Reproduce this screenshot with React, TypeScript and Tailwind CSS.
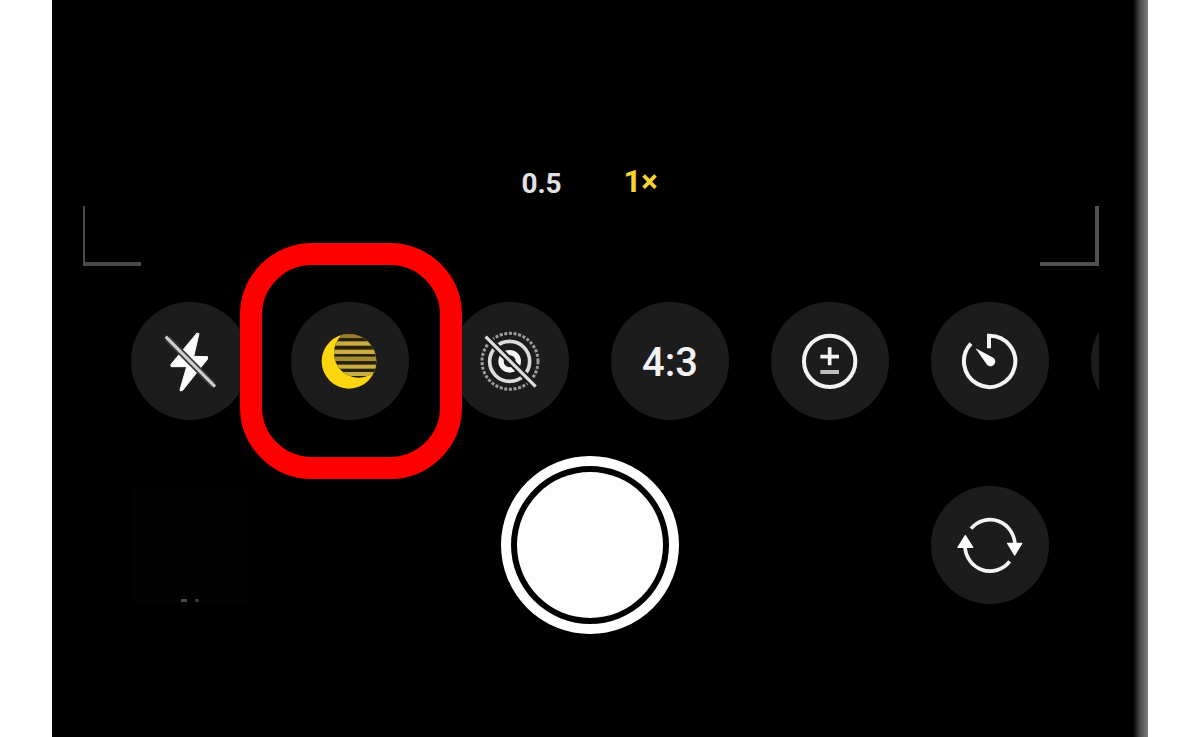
import React, { useState } from 'react';

const iconProps = {
  viewBox: '0 0 180 180',
  fill: 'none',
  'aria-hidden': true,
  className: 'w-[60px] h-[60px] overflow-visible',
};

const FlashOffIcon = () => (
  <svg {...iconProps}>
    <path d="M111 6 L117 8 L101 76 L143 77 L142 85 L68 178 L61 180 L60 176 L80 107 L33 107 L33 100 Z" fill="#fff" stroke="#fff" strokeWidth="3" strokeLinejoin="round" />
    <path d="M22 22 L160 162" stroke="#3a3a3a" strokeWidth="20" />
    <path d="M17 17 L165 167" stroke="#cfcfcf" strokeWidth="9" />
  </svg>
);

const NightModeIcon = () => (
  <svg {...iconProps}>
    <defs>
      <clipPath id="moon-disc"><circle cx="87" cy="91" r="82" /></clipPath>
      <clipPath id="moon-shade"><circle cx="116" cy="66" r="74" /></clipPath>
    </defs>
    <circle cx="87" cy="91" r="82" fill="#fcd60e" />
    <g clipPath="url(#moon-disc)">
      <g clipPath="url(#moon-shade)">
        <rect width="180" height="180" fill="#2a220c" />
        <g fill="#c9ae42">
          <rect y="6" width="180" height="15" fill="#97802c" />
          <rect y="31" width="180" height="13" />
          <rect y="56" width="180" height="13" />
          <rect y="77" width="180" height="13" fill="#a88f34" />
          <rect y="101" width="180" height="12" />
          <rect y="123" width="180" height="12" />
        </g>
      </g>
    </g>
  </svg>
);

const LiveOffIcon = () => (
  <svg {...iconProps}>
    <circle cx="90" cy="91" r="84" stroke="#9c9c9c" strokeWidth="9" strokeDasharray="9 5" />
    <circle cx="89" cy="91" r="60" stroke="#dcdcdc" strokeWidth="11" />
    <circle cx="89" cy="91" r="26" stroke="#f4f4f4" strokeWidth="16" />
    <path d="M8 7 L163 163" stroke="#1c1c1c" strokeWidth="22" />
    <path d="M17 17 L167 167" stroke="#dedede" strokeWidth="10" />
  </svg>
);

const ExposureIcon = () => (
  <svg {...iconProps} stroke="#f4f4f4">
    <circle cx="89" cy="91" r="77" strokeWidth="12" />
    <path d="M89 49 V103 M61 77 H117" strokeWidth="11" />
    <path d="M61 123 H117" stroke="#bdbdbd" strokeWidth="12" />
  </svg>
);

const TimerIcon = () => (
  <svg {...iconProps}>
    <path d="M87 52 V14 A77 77 0 1 1 33 38" stroke="#f4f4f4" strokeWidth="12" />
    <path d="M49 54 L101 82 A12 12 0 1 1 82 101 Z" fill="#fff" stroke="#fff" strokeWidth="2" strokeLinejoin="round" />
  </svg>
);

const FlipIcon = () => (
  <svg {...iconProps}>
    <path d="M33 41 A75 77 0 0 1 165 91 M149 139 A75 77 0 0 1 15 91" stroke="#f4f4f4" strokeWidth="11" />
    <path d="M143 85 H185 L164 120 Z M-6 97 H38 L16 62 Z" fill="#fff" stroke="#fff" strokeWidth="4" strokeLinejoin="round" />
  </svg>
);

interface RoundButtonProps {
  label: string;
  children?: React.ReactNode;
}

const RoundButton: React.FC<RoundButtonProps> = ({ label, children }) => (
  <button
    type="button"
    aria-label={label}
    className="relative flex h-[118px] w-[118px] shrink-0 items-center justify-center rounded-full bg-[#1c1c1c]"
  >
    {children}
  </button>
);

const App: React.FC = () => {
  const [zoom, setZoom] = useState<'0.5' | '1'>('1');

  return (
    <div className="min-h-screen bg-white px-[52px] font-['Roboto',sans-serif]">
      <div className="flex min-h-screen bg-black">
        <main className="min-w-0 flex-1 pr-8 pl-[31px]">
          {/* Viewfinder */}
          <div className="flex items-start justify-center pt-[163px]">
            <button
              type="button"
              onClick={() => setZoom('0.5')}
              className={`h-[41px] w-[99px] text-[28px] leading-10 font-bold ${zoom === '0.5' ? 'text-[#fbd52f]' : 'text-[#e2e2e2]'}`}
            >
              0.5
            </button>
            <button
              type="button"
              onClick={() => setZoom('1')}
              className={`h-[41px] w-[99px] pb-1 text-[31px] leading-9 font-bold ${zoom === '1' ? 'text-[#fbd52f]' : 'text-[#e2e2e2]'}`}
            >
              1×
            </button>
          </div>
          <div className="mt-0.5 flex h-[60px] justify-between">
            <div className="w-[58px] border-b-4 border-l-2 border-[#4a4a4a]" />
            <div className="w-[59px] border-r-4 border-b-4 border-[#505050]" />
          </div>

          {/* Camera tools, the last one runs off the edge */}
          <div className="mt-9 flex gap-[42px] overflow-x-clip pl-12">
            <RoundButton label="Flash off"><FlashOffIcon /></RoundButton>
            <RoundButton label="Night mode">
              <NightModeIcon />
              <span className="pointer-events-none absolute -top-[59px] -right-[53px] -bottom-[59px] -left-[51px] z-10 rounded-[72px] border-[22px] border-[#ff0000]" />
            </RoundButton>
            <RoundButton label="Live photo off"><LiveOffIcon /></RoundButton>
            <RoundButton label="Aspect ratio 4:3">
              <span className="pt-1 text-[40px] font-medium text-[#f2f2f2]">4:3</span>
            </RoundButton>
            <RoundButton label="Exposure"><ExposureIcon /></RoundButton>
            <RoundButton label="Timer"><TimerIcon /></RoundButton>
            <RoundButton label="Filters" />
          </div>

          {/* Shutter row */}
          <div className="mt-9 flex items-center justify-between pr-[50px] pb-[103px] pl-12">
            <button
              type="button"
              aria-label="Last photo"
              className="flex h-[118px] w-[118px] items-end justify-center gap-2 bg-[#020202] pb-0.5"
            >
              <span className="h-[3px] w-1.5 bg-[#4a4a4a]" />
              <span className="h-[3px] w-1 bg-[#383838]" />
            </button>
            <button
              type="button"
              aria-label="Take photo"
              className="h-[178px] w-[178px] rounded-full border-[10px] border-white p-1.5"
            >
              <span className="block h-full w-full rounded-full bg-[#fdfdfd]" />
            </button>
            <RoundButton label="Flip camera"><FlipIcon /></RoundButton>
          </div>
        </main>
        <div className="w-[17px] bg-linear-to-r from-black via-[#484848] to-[#7c7c7c]" />
      </div>
    </div>
  );
};

export default App;
